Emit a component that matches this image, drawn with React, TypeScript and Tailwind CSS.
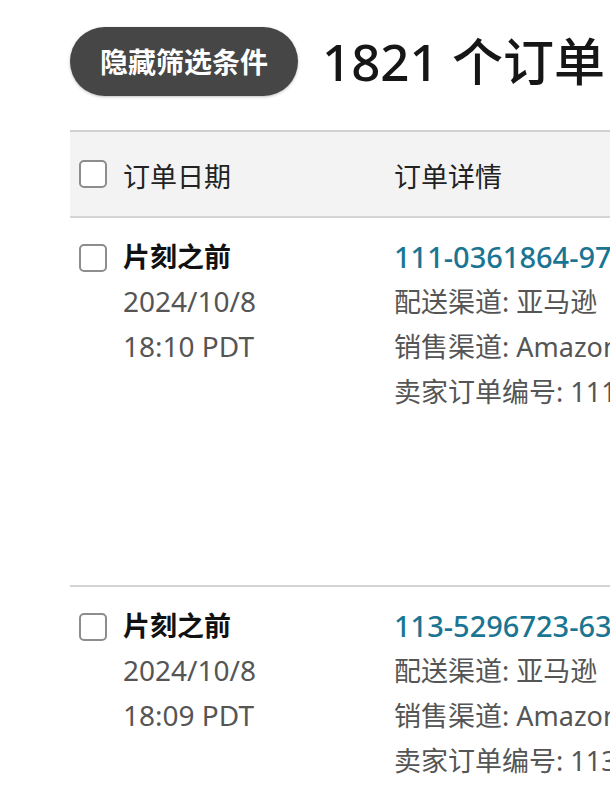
import React from "react";

const font = { fontFamily: '"Noto Sans", "Noto Sans CJK SC", sans-serif' };

function Box() {
  return <div className="w-[28px] h-[28px] shrink-0 rounded-[5px] border-2 border-[#8d8d8d] bg-white" />;
}

type Row = { time: string; id: string; seller: string };

const rows: Row[] = [
  { time: "18:10 PDT", id: "111-0361864-9754625", seller: "111-0361864-9754625" },
  { time: "18:09 PDT", id: "113-5296723-6312345", seller: "113-5296723-6312345" },
];

export default function App() {
  return (
    <div className="w-[610px] h-[786px] overflow-hidden bg-white" style={font}>
      <div className="flex items-center gap-[24px] pl-[70px] pt-[27px] whitespace-nowrap">
        <div className="h-[69px] w-[228px] shrink-0 rounded-full bg-[#464646] flex items-center justify-center text-white font-bold text-[28px] shadow-[0_1px_3px_rgba(0,0,0,0.25)]">
          隐藏筛选条件
        </div>
        <div className="text-[51px] leading-none text-[#161616] font-medium">1821 个订单</div>
      </div>

      <div className="ml-[70px] mt-[34px] w-[900px] border-t-2 border-[#d0d0d0]">
        <div className="h-[86px] bg-[#f3f3f3] border-b-2 border-[#d5d5d5] flex items-center text-[27px] text-[#222]">
          <div className="w-[324px] flex items-center gap-[16px] pl-[9px]">
            <Box />
            <span className="pt-[6px]">订单日期</span>
          </div>
          <div className="pt-[6px]">订单详情</div>
        </div>

        {rows.map((r, i) => (
          <div
            key={i}
            className={`flex h-[369px] pt-[16px] ${i === 0 ? "border-b-2 border-[#d3d3d3]" : ""}`}
          >
            <div className="w-[324px] flex items-start gap-[16px] pl-[9px]">
              <div className="pt-[10px]">
                <Box />
              </div>
              <div className="text-[28px] leading-[45px] text-[#555]">
                <div className="font-bold text-[#111] text-[27px]">片刻之前</div>
                <div>2024/10/8</div>
                <div>{r.time}</div>
              </div>
            </div>
            <div className="text-[27px] leading-[45px] text-[#555] whitespace-nowrap">
              <div className="text-[#1a7593] text-[29px] font-medium">{r.id}</div>
              <div>配送渠道: 亚马逊</div>
              <div>销售渠道: Amazon.com</div>
              <div>卖家订单编号: {r.seller}</div>
            </div>
          </div>
        ))}
      </div>
    </div>
  );
}
